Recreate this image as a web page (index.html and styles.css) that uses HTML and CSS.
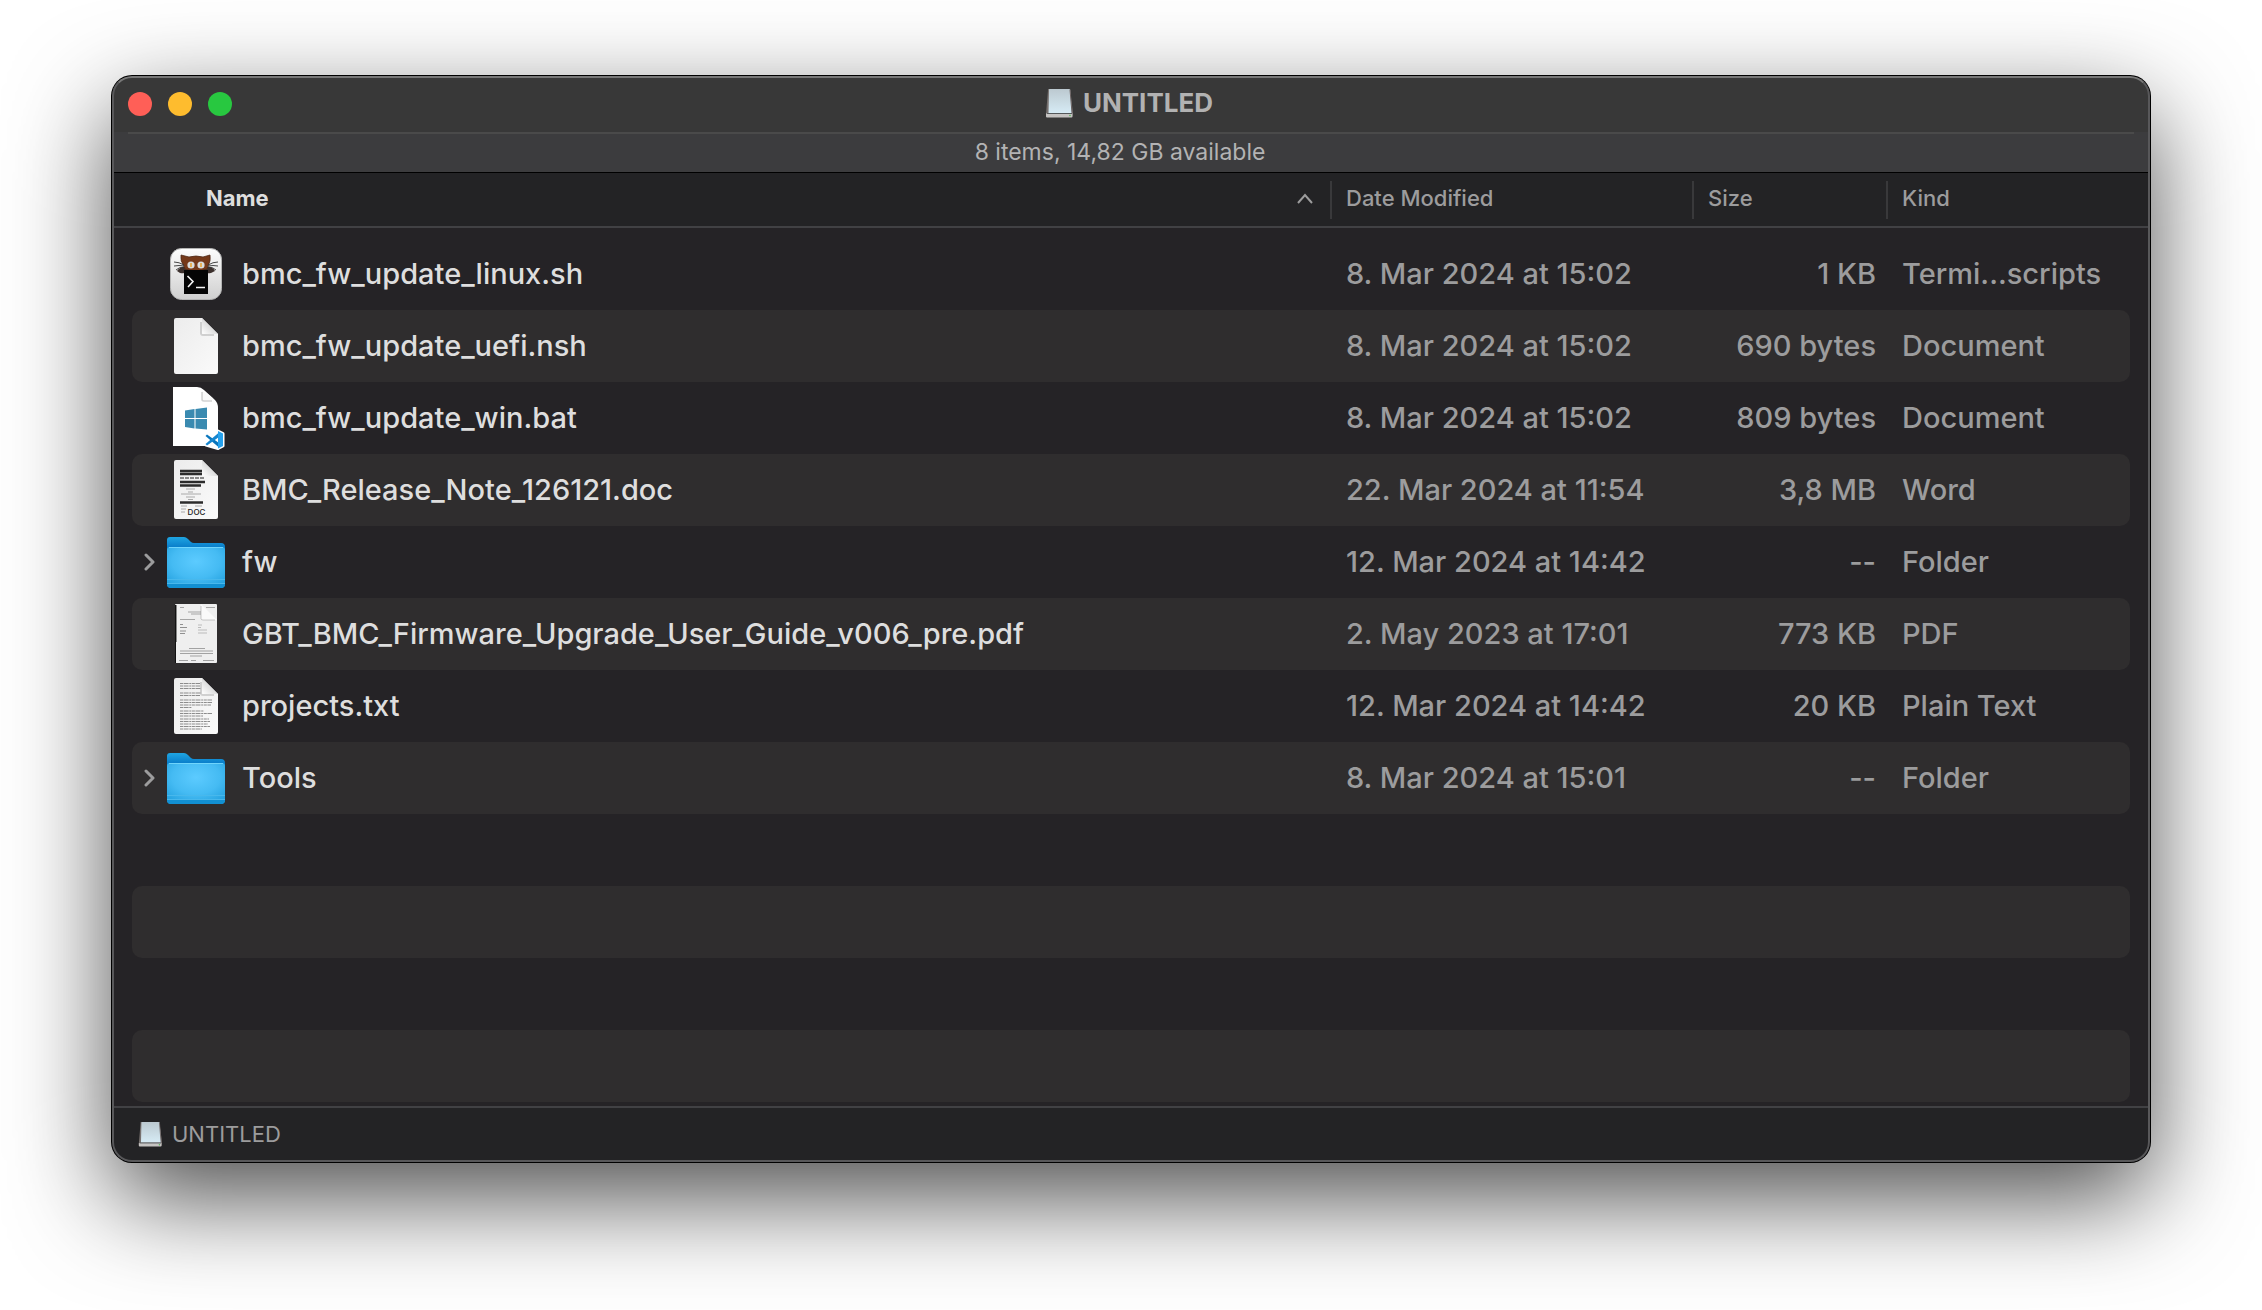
FILE: index.html
```html
<!DOCTYPE html>
<html lang="en">
<head>
<meta charset="utf-8">
<meta name="viewport" content="width=device-width, initial-scale=1">
<title>UNTITLED</title>
<link rel="stylesheet" href="styles.css">
</head>
<body>
<svg class="defs" width="0" height="0" aria-hidden="true">
  <defs>
    <linearGradient id="paper" x1="0" y1="0" x2="1" y2="1"><stop offset="0" stop-color="#ececec"/><stop offset="1" stop-color="#fafafa"/></linearGradient>
    <linearGradient id="fold" x1="0" y1="1" x2="1" y2="0"><stop offset="0" stop-color="#fff"/><stop offset=".5" stop-color="#dcdcdc"/></linearGradient>
    <linearGradient id="tile" x1="0" y1="0" x2="0" y2="1"><stop offset="0" stop-color="#fdfdfd"/><stop offset="1" stop-color="#cfcfcf"/></linearGradient>
    <linearGradient id="folderBack" x1="0" y1="0" x2="0" y2="1"><stop offset="0" stop-color="#1fa5e2"/><stop offset=".3" stop-color="#0a7fcb"/></linearGradient>
    <radialGradient id="folderFront" cx=".5" cy=".35" r=".75"><stop offset="0" stop-color="#5ccbff"/><stop offset=".55" stop-color="#45bbf3"/><stop offset="1" stop-color="#219fdd"/></radialGradient>
    <linearGradient id="glass" x1="0" y1="0" x2="0" y2="1"><stop offset="0" stop-color="#bcc9d0"/><stop offset="1" stop-color="#d6ebf5"/></linearGradient>
    <symbol id="disk" viewBox="0 0 28 30">
      <path d="M3 2L1 26V29H27L28 25 25 1H3z" fill="#77716f"/>
      <path d="M4.500 1H24.500Q25 1 25.200 2L27 25H3.500L4 2Q4 1 4.500 1z" fill="url(#glass)"/>
      <path d="M25 1.500L27 25" stroke="#6c6363" stroke-width="1"/>
      <path d="M1 25.500H27.500V28.500Q27.500 29.500 26.500 29.500H2Q1 29.500 1 28.500z" fill="#c5c3c2"/>
      <path d="M2 25.500H27" stroke="#55595b" stroke-width="1"/>
      <circle cx="25" cy="27.500" r=".8" fill="#4fba54"/>
    </symbol>
    <symbol id="page" viewBox="0 0 64 64">
      <path d="M12 4H38L54 20V58Q54 60 52 60H12Q10 60 10 58V6Q10 4 12 4z" fill="url(#paper)"/>
      <path d="M37 8V19Q37 21 39 21H50" fill="none" stroke="#000" stroke-opacity=".14" stroke-width="2"/>
      <path d="M38 4L54 20H39Q38 20 38 19z" fill="url(#fold)"/>
    </symbol>
    <symbol id="folder" viewBox="0 0 64 64">
      <path d="M6 7H20Q22 7 24 9L27 12Q28 13 30 13H57Q61 13 61 17V40H3V10Q3 7 6 7z" fill="url(#folderBack)"/>
      <path d="M6 17H58Q61 17 61 20V54Q61 58 57 58H7Q3 58 3 54V20Q3 17 6 17z" fill="url(#folderFront)"/>
      <path d="M3 53.500H61V54Q61 58 57 58H7Q3 58 3 54z" fill="#1290d2"/>
      <path d="M5 17.500H59" stroke="#7bdcff" stroke-opacity=".8"/>
      <path d="M3 49.500H61M3 53.500H61" stroke="#48b8ec" stroke-width="1"/>
    </symbol>
  </defs>
</svg>

<main class="window">
  <header class="titlebar">
    <div class="lights">
      <button class="light close" type="button" aria-label="Close"></button>
      <button class="light minimise" type="button" aria-label="Minimise"></button>
      <button class="light zoom" type="button" aria-label="Zoom"></button>
    </div>
    <h1 class="title"><svg class="title-disk" aria-hidden="true"><use href="#disk"/></svg>UNTITLED</h1>
  </header>
  <p class="status">8 items, 14,82 GB available</p>

  <table class="files">
    <thead>
      <tr>
        <th class="name" scope="col" aria-sort="ascending"><button type="button">Name<svg class="sort" viewBox="0 0 18 12" aria-hidden="true"><path d="M2 11L9 3L16 11"/></svg></button></th>
        <th scope="col"><button type="button">Date Modified</button></th>
        <th scope="col"><button type="button">Size</button></th>
        <th scope="col"><button type="button">Kind</button></th>
      </tr>
    </thead>
    <tbody>
      <tr>
        <td class="name">
          <svg class="icon" viewBox="0 0 64 64" aria-hidden="true">
            <rect x="6.500" y="6.500" width="51" height="51" rx="11" fill="url(#tile)" stroke="#b5b5b5"/>
            <path d="M13 29Q17 24 22 25H42Q48 24 51 29L47 31Q40 32 38 29H26Q22 32 16 31z" fill="#3c302d"/>
            <path d="M17 13L25 15Q32 13 39 15L46 13Q47 19 44 24L43 27Q32 31 21 27L20 24Q16 19 17 13z" fill="#75391a" stroke="#4f2918" stroke-width=".8"/>
            <circle cx="27" cy="23" r="3.600" fill="#d9dcdc"/><circle cx="37" cy="23" r="3.600" fill="#d9dcdc"/>
            <path d="M27 21V25M37 21V25" stroke="#eda42c" stroke-width="1.500"/>
            <path d="M10 20Q15 20 20 23M10 24Q15 23 20 24M12 28Q15 25 20 25M54 20Q49 20 44 23M54 24Q49 23 44 24M52 28Q49 25 44 25" fill="none" stroke="#333" stroke-width=".9"/>
            <rect x="20" y="28" width="24" height="24" fill="#050505"/>
            <path d="M23.500 34L29 39.500L24 45M32 45.500H41" fill="none" stroke="#f5f5f5" stroke-width="1.600"/>
          </svg>
          <span>bmc_fw_update_linux.sh</span>
        </td>
        <td>8. Mar 2024 at 15:02</td><td class="size">1 KB</td><td>Termi...scripts</td>
      </tr>
      <tr>
        <td class="name"><svg class="icon" aria-hidden="true"><use href="#page"/></svg><span>bmc_fw_update_uefi.nsh</span></td>
        <td>8. Mar 2024 at 15:02</td><td class="size">690 bytes</td><td>Document</td>
      </tr>
      <tr>
        <td class="name">
          <svg class="icon" viewBox="0 0 64 64" aria-hidden="true">
            <path d="M9 1H33Q37 1 40 4L51 14Q54 17 54 22V60H9z" fill="#fff"/>
            <path d="M38 5V14H50Q47 9 38 5z" fill="#fafafa"/>
            <path d="M38 6V13.500Q38 15 40 15H48" fill="none" stroke="#000" stroke-opacity=".18" stroke-width="1.500"/>
            <path d="M21 24.500L30.500 23V32H21zM31.500 23L43 21.500V32H31.500zM21 33H30.500V42.500L21 41zM31.500 33H43V43.500L31.500 42.500z" fill="#3a8ab0"/>
            <path d="M54 45L59 47.500V60L54 62.500L42 51.500V49zM54 45L42 57V59L54 62.500z" fill="#fff" stroke="#fff" stroke-width="3" stroke-linejoin="round"/>
            <path d="M41.500 50L55 61.500V57L43 48.500z" fill="#0a76bd"/>
            <path d="M41.500 58L55 46.500V51L43 59.500z" fill="#1686cf"/>
            <path d="M54 45L59 47.500V60L54 62.500z" fill="#26a1ec"/>
          </svg>
          <span>bmc_fw_update_win.bat</span>
        </td>
        <td>8. Mar 2024 at 15:02</td><td class="size">809 bytes</td><td>Document</td>
      </tr>
      <tr>
        <td class="name">
          <svg class="icon" viewBox="0 0 64 64" aria-hidden="true">
            <path d="M12 2H38L54 18V59Q54 61 52 61H12Q10 61 10 59V4Q10 2 12 2z" fill="url(#paper)"/>
            <path d="M16 13H38M16 16H38M16 24H41M16 27.500H37M16 44.500H39" stroke="#2b2b2b" stroke-width="2.400"/>
            <path d="M16 20H40" stroke="#888" stroke-width="2" stroke-dasharray="4 1"/>
            <path d="M22 31H31M24 34H29M17 36H37M22 39H31M24 41.500H29M17 48H23M17 51H22M17 54H21M31 48H38" stroke="#aaa" stroke-width="1"/>
            <path d="M38 2L54 18H39Q38 18 38 17z" fill="url(#fold)"/>
            <text class="badge" x="32.500" y="56.500" text-anchor="middle">DOC</text>
          </svg>
          <span>BMC_Release_Note_126121.doc</span>
        </td>
        <td>22. Mar 2024 at 11:54</td><td class="size">3,8 MB</td><td>Word</td>
      </tr>
      <tr>
        <td class="name"><button class="expand" type="button" aria-label="Expand fw"><svg viewBox="0 0 12 18"><path d="M2 2L9 9L2 16"/></svg></button><svg class="icon" aria-hidden="true"><use href="#folder"/></svg><span>fw</span></td>
        <td>12. Mar 2024 at 14:42</td><td class="size">--</td><td>Folder</td>
      </tr>
      <tr>
        <td class="name">
          <svg class="icon" viewBox="0 0 64 64" aria-hidden="true">
            <rect x="11" y="2" width="42" height="59" rx="1" fill="#efefef"/>
            <path d="M11.500 3V61" stroke="#111"/>
            <path d="M12.500 3V40" stroke="#888"/>
            <path d="M16 5.500H20M42 5.500H51M24 10H43M27 12H39M16 17.500H31" stroke="#a5a5a5" stroke-width="1"/>
            <path d="M34 23H38M34 25.500H37M34 28H43M34 31H43" stroke="#bbb" stroke-width="1"/>
            <path d="M16 22.500H19M16 25.500H23M16 29H22M16 31.500H21" stroke="#909090" stroke-width="1"/>
            <path d="M25 46.500H41M16 49H49M16 51.500H49M26 54H38M15 58.500H24M27 58.500H32M39 58.500H50" stroke="#999" stroke-width=".9"/>
            <path d="M37 2L53 18H38Q37 18 37 17z" fill="#fafafa"/>
            <path d="M37 4V16.500Q37 18 39 18H51" fill="none" stroke="#000" stroke-opacity=".2" stroke-width="1"/>
          </svg>
          <span>GBT_BMC_Firmware_Upgrade_User_Guide_v006_pre.pdf</span>
        </td>
        <td>2. May 2023 at 17:01</td><td class="size">773 KB</td><td>PDF</td>
      </tr>
      <tr>
        <td class="name">
          <svg class="icon" viewBox="0 0 64 64" aria-hidden="true">
            <use href="#page"/>
            <path d="M16 9.500H36M16 12H36M16 14.500H37M16 19H37M16 21.500H36M16 26H48M16 28.500H48M16 31H47M16 33.500H28M16 37H40M16 39.500H48M16 42H39M16 45H45M16 47.500H46M16 50H44M16 52.500H46M16 55H38" stroke="#8c8c8c" stroke-width="1" stroke-dasharray="3 .6 5 .7 2 .6"/>
          </svg>
          <span>projects.txt</span>
        </td>
        <td>12. Mar 2024 at 14:42</td><td class="size">20 KB</td><td>Plain Text</td>
      </tr>
      <tr>
        <td class="name"><button class="expand" type="button" aria-label="Expand Tools"><svg viewBox="0 0 12 18"><path d="M2 2L9 9L2 16"/></svg></button><svg class="icon" aria-hidden="true"><use href="#folder"/></svg><span>Tools</span></td>
        <td>8. Mar 2024 at 15:01</td><td class="size">--</td><td>Folder</td>
      </tr>
      <tr aria-hidden="true"></tr>
      <tr aria-hidden="true"></tr>
      <tr aria-hidden="true"></tr>
      <tr aria-hidden="true"></tr>
    </tbody>
  </table>

  <footer class="pathbar"><svg class="path-disk" aria-hidden="true"><use href="#disk"/></svg>UNTITLED</footer>
</main>
</body>
</html>
```
FILE: styles.css
```css
* { box-sizing: border-box; }

body {
  margin: 0;
  padding: 76px 112px 148px;
  background: #fff;
  color: #9c9c9d;
  font-family: Inter, "Liberation Sans", sans-serif;
  font-size: 29px;
}

.defs { position: absolute; }

button {
  padding: 0;
  border: 0;
  background: none;
  color: inherit;
  font: inherit;
}

.window {
  position: relative;
  overflow: hidden;
  border-radius: 20px;
  background: #252326;
  box-shadow: 0 0 0 1px #000, 0 36px 100px rgba(0, 0, 0, .7);
}

/* light inner rim, painted above every bar */
.window::after {
  content: "";
  position: absolute;
  inset: 0;
  border: 2px solid #58585a;
  border-top-color: #777;
  border-radius: 20px;
  pointer-events: none;
}

.titlebar {
  display: grid;
  grid-template-columns: 1fr auto 1fr;
  align-items: center;
  height: 56px;
  padding: 0 16px;
  background: #383838;
}

.lights { display: flex; gap: 16px; }
.light { width: 24px; height: 24px; border-radius: 50%; }
.close { background: #ff5f57; }
.minimise { background: #febc2e; }
.zoom { background: #28c840; }

.title {
  display: flex;
  align-items: center;
  gap: 10px;
  margin: 0;
  padding: 0 4px 2px 0;
  color: #b2b2b2;
  font-size: 26px;
  line-height: 32px;
  font-weight: 700;
}
.title-disk { width: 28px; height: 30px; }

.status {
  height: 40px;
  margin: 0;
  padding-right: 22px;
  background: linear-gradient(#4a4a4a, #4a4a4a) center top / calc(100% - 32px) 2px no-repeat #3c3c3e;
  color: #b3b3b4;
  font-size: 23px;
  line-height: 40px;
  text-align: center;
}

.files, .files thead, .files tbody { display: block; }
.files tr {
  display: grid;
  grid-template-columns: 1fr 362px 194px 244px;
  align-items: center;
}

.files thead tr {
  height: 56px;
  padding: 0 20px;
  border-top: 1px solid #000;
  border-bottom: 2px solid #414144;
  background: #232325;
}
.files th {
  height: 38px;
  padding: 0 0 0 14px;
  border-left: 2px solid #39393b;
  font-size: 22px;
  line-height: 34px;
  font-weight: 500;
  text-align: left;
}
.files th.name { padding: 0 16px 0 74px; border: 0; color: #dedede; font-weight: 700; }
.files th.name button { display: flex; align-items: center; justify-content: space-between; width: 100%; }
.sort { width: 18px; height: 12px; fill: none; stroke: #9c9c9d; stroke-width: 2; }

.files tbody { padding: 10px 20px 4px; }
.files tbody tr { height: 72px; border-radius: 10px; }
.files tbody tr:nth-child(even) { background: #2f2d2e; }
.files td { padding: 0 0 0 16px; font-weight: 450; line-height: 36px; white-space: nowrap; }
.files td.size { padding: 0 10px 0 0; text-align: right; }
.files td.name {
  display: grid;
  grid-template-columns: 20px 64px 1fr;
  align-items: center;
  padding: 0 0 0 12px;
  color: #dedede;
  font-weight: 500;
}
.icon { grid-column: 2; grid-row: 1; width: 64px; height: 64px; }
.name span { grid-column: 3; grid-row: 1; padding-left: 14px; }
.badge { fill: #222; font-size: 8px; font-weight: 500; }

.expand { display: flex; grid-column: 1; grid-row: 1; }
.expand svg { width: 12px; height: 18px; fill: none; stroke: #9c9c9d; stroke-width: 3; stroke-linecap: round; stroke-linejoin: round; }

.pathbar {
  display: flex;
  align-items: center;
  gap: 10px;
  height: 56px;
  padding: 0 26px 2px;
  border-top: 2px solid #414144;
  background: #232325;
  font-size: 22px;
  line-height: 28px;
}
.path-disk { width: 24px; height: 26px; }
```
